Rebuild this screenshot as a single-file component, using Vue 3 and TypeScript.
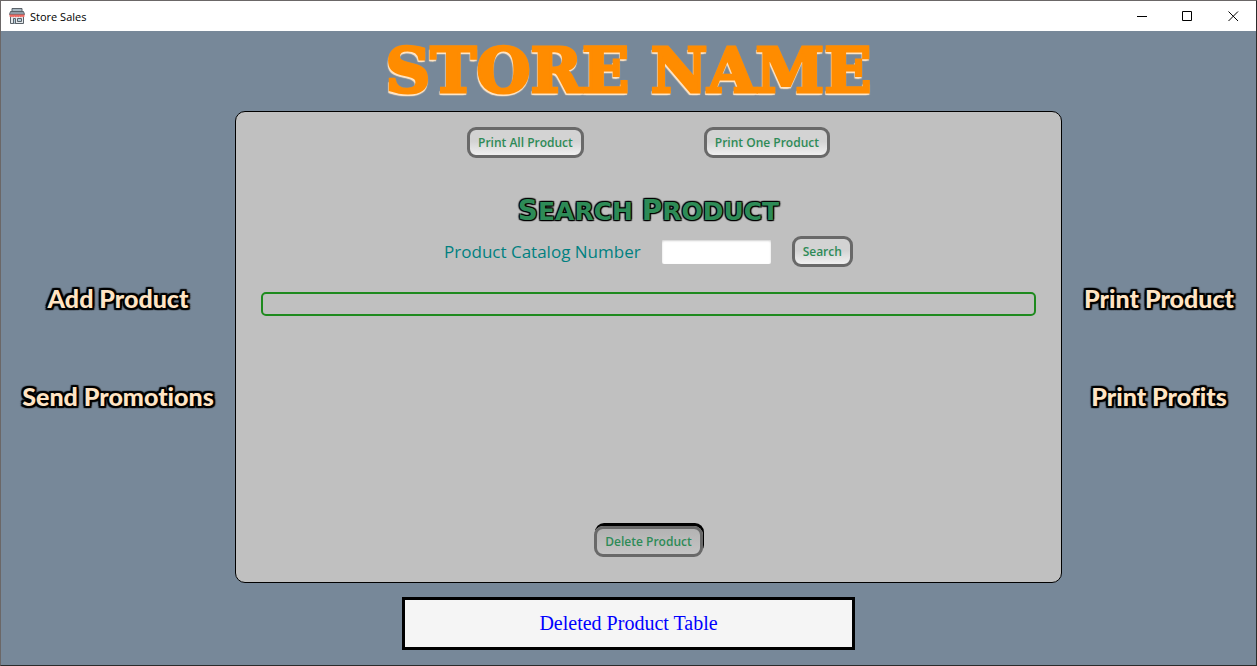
<script setup lang="ts">
import { ref } from 'vue'

const catalogNumber = ref('')
const leftActions: string[] = ['Add Product', 'Send Promotions']
const rightActions: string[] = ['Print Product', 'Print Profits']
const headingWords: string[] = ['Search', 'Product']
</script>

<template>
  <div class="window">
    <header class="titlebar">
      <svg class="app-icon" viewBox="0 0 16 16" aria-hidden="true">
        <path d="M3 .5h10v4H3z" fill="#a9b8c2" stroke="#5a6269" />
        <path d="M1.500 8v7.500h13V8" fill="#e4e8eb" stroke="#5a6269" />
        <path d="M1.500 3.500h13l1 3H.5z" fill="#8e9ba6" stroke="#5a6269" />
        <path d="M.5 6.500h15v2q-1.200 1.400-2.500 0-1.200 1.400-2.500 0-1.200 1.400-2.500 0-1.200 1.400-2.500 0-1.200 1.400-2.500 0-1.200 1.400-2.500 0z" fill="#ee6a63" />
        <path d="M4.500 15.500v-5h2v5M8.500 10.500h4v3h-4z" fill="#b5cbd9" stroke="#5a6269" />
      </svg>
      <span class="app-name">Store Sales</span>
      <div class="controls">
        <button type="button" aria-label="Minimize">
          <svg viewBox="0 0 11 11"><path d="M1 5.500h10" /></svg>
        </button>
        <button type="button" aria-label="Maximize">
          <svg viewBox="0 0 11 11"><path d="M.5.5h9v9h-9z" /></svg>
        </button>
        <button type="button" aria-label="Close">
          <svg viewBox="0 0 11 11"><path d="M.5.5l9.500 9.500M10 .5l-9.500 9.500" /></svg>
        </button>
      </div>
    </header>

    <h1 class="store-name">STORE NAME</h1>

    <div class="body">
      <nav class="side">
        <button v-for="a in leftActions" :key="a" type="button" class="side-action">{{ a }}</button>
      </nav>

      <main class="panel">
        <div class="print-row">
          <button type="button" class="btn">Print All Product</button>
          <button type="button" class="btn">Print One Product</button>
        </div>
        <h2 class="heading">
          <template v-for="(w, i) in headingWords" :key="w">{{ i ? ' ' : '' }}<span class="word">{{ w }}</span></template>
        </h2>
        <form class="search" @submit.prevent>
          <label for="catalog">Product Catalog Number</label>
          <input id="catalog" v-model="catalogNumber" type="text" />
          <button type="submit" class="btn">Search</button>
        </form>
        <output class="result" for="catalog"></output>
        <button type="button" class="btn delete">Delete Product</button>
      </main>

      <nav class="side">
        <button v-for="a in rightActions" :key="a" type="button" class="side-action">{{ a }}</button>
      </nav>
    </div>

    <footer class="footer">
      <button type="button" class="deleted">Deleted Product Table</button>
    </footer>
  </div>
</template>

<style>
body {
  margin: 0;
}
</style>

<style scoped>
.window {
  box-sizing: border-box;
  min-height: 100vh;
  display: flex;
  flex-direction: column;
  background: #778899;
  border: 1px solid #2b2b2b;
  border-top-color: #6b6767;
  border-left-color: #6b6767;
  font-family: "Open Sans", "Noto Sans", sans-serif;
}
button {
  font-family: inherit;
  margin: 0;
}
.titlebar {
  display: flex;
  align-items: center;
  height: 30px;
  padding-left: 8px;
  background: #fff;
}
.app-icon {
  width: 16px;
  height: 16px;
}
.app-name {
  margin-left: 5px;
  font-size: 11px;
  color: #000;
}
.controls {
  display: flex;
  margin-left: auto;
}
.controls button {
  display: flex;
  align-items: center;
  justify-content: center;
  width: 46px;
  height: 30px;
  padding: 0;
  border: 0;
  background: none;
}
.controls svg {
  width: 11px;
  height: 11px;
  fill: none;
  stroke: #000;
}
.store-name {
  margin: 0;
  height: 80px;
  line-height: 80px;
  text-align: center;
  font-family: "DejaVu Serif", serif;
  font-size: 62px;
  font-weight: 700;
  color: #ff8c00;
  -webkit-text-stroke: 3px #ff8c00;
  text-shadow: -2px 3px 1px #ffe4c4, -1px 3px 1px #ffe4c4, 1px 3px 1px #ffe4c4, 0 0 2px #ffe4c4;
}
.body {
  flex: 1;
  display: grid;
  grid-template-columns: 234px 1fr 194px;
}
.side {
  display: flex;
  flex-direction: column;
  align-items: center;
  justify-content: center;
  gap: 66px;
}
.side-action {
  padding: 0;
  border: 0;
  background: none;
  white-space: nowrap;
  font-family: Lato, sans-serif;
  font-size: 25px;
  line-height: 32px;
  font-weight: 900;
  font-variant-ligatures: none;
  color: #ffe4c4;
  text-shadow: 2px 0 1px #000, -2px 0 1px #000, 0 2px 1px #000, 0 -2px 1px #000,
    2px 2px 1px #000, -2px 2px 1px #000, 2px -2px 1px #000, -2px -2px 1px #000, 0 0 3px #000;
}
.panel {
  box-sizing: border-box;
  display: flex;
  flex-direction: column;
  align-items: center;
  padding: 15px 25px 25px;
  border: 1px solid #000;
  border-radius: 10px;
  background: #c0c0c0;
}
.print-row {
  display: flex;
  gap: 120px;
}
.btn {
  box-sizing: border-box;
  height: 31px;
  padding: 0 8px;
  border: 3px solid #696969;
  border-radius: 9px;
  background: linear-gradient(#d3d3d3 45%, #f0f0f0);
  font-size: 12px;
  font-weight: 600;
  color: #2e8b57;
}
.heading {
  margin: 35px 0 0;
  line-height: 36px;
  font-family: "DejaVu Sans", sans-serif;
  font-size: 25px;
  font-weight: 700;
  text-transform: uppercase;
  color: #2e8b57;
  text-shadow: 1px 1px 1px #000, -1px 1px 1px #000, 1px -1px 1px #000, -1px -1px 1px #000, 0 0 2px #000;
}
.word {
  display: inline-block;
}
.word::first-letter {
  font-size: 28px;
}
.search {
  display: flex;
  align-items: center;
  gap: 21px;
  margin-top: 6px;
}
.search label {
  font-size: 17px;
  line-height: 24px;
  color: #008080;
}
.search input {
  box-sizing: border-box;
  width: 109px;
  height: 24px;
  padding: 0 6px;
  border: 0;
  border-radius: 2px;
  background: #fff;
  box-shadow: inset 0 1px 2px #d0d0d0;
}
.result {
  box-sizing: border-box;
  align-self: stretch;
  height: 24px;
  margin-top: 25px;
  border: 2px solid #1e8a1e;
  border-radius: 5px;
}
.delete {
  margin-top: auto;
  background: linear-gradient(#b3b3b3, #c4c4c4);
  box-shadow: 1px -3px 0 #000;
}
.footer {
  display: flex;
  justify-content: center;
  padding: 14px 0 15px;
}
.deleted {
  box-sizing: border-box;
  width: 453px;
  max-width: 100%;
  height: 53px;
  border: 3px solid #000;
  background: #f5f5f5;
  font-family: "Liberation Serif", serif;
  font-size: 20px;
  color: #0000ff;
}
</style>
